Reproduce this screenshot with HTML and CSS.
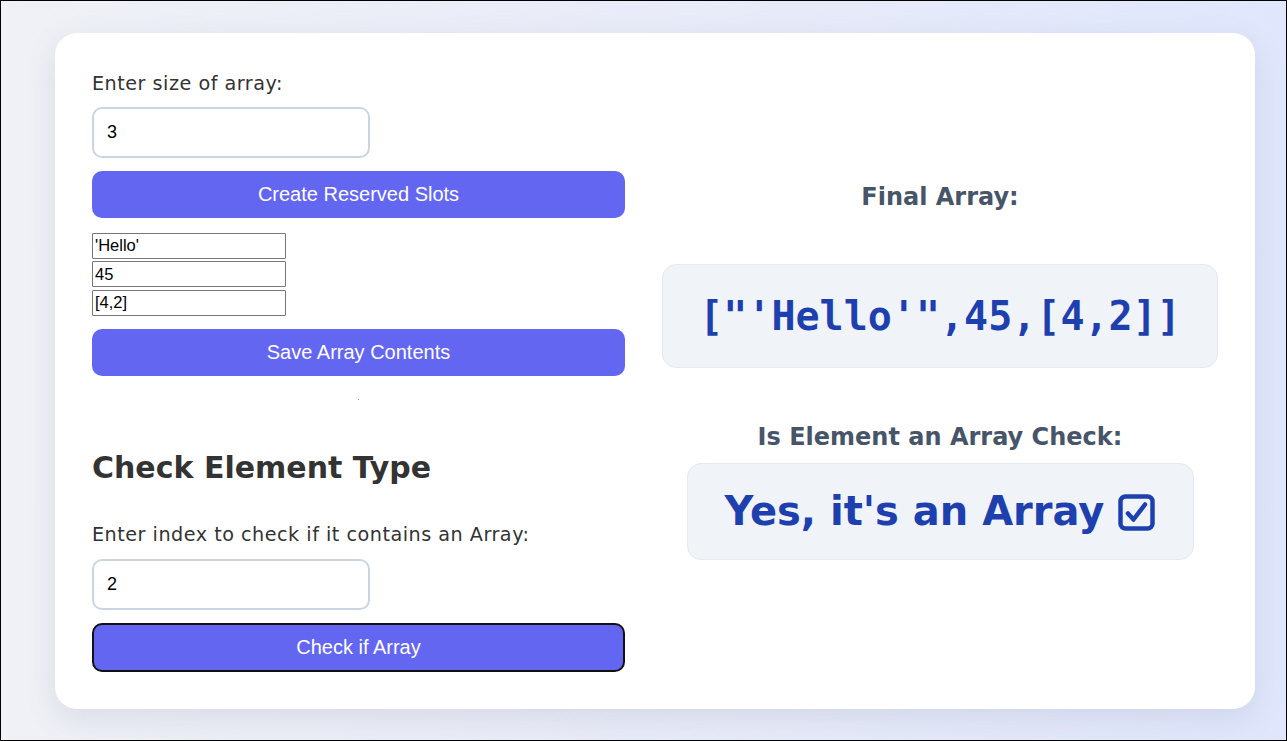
FILE: index.html
```html
<!DOCTYPE html>
<html>
<head>
<meta charset="utf-8">
<link rel="stylesheet" href="styles.css">
</head>
<body>
<div class="page">
  <div class="card">
    <div class="left">
      <label class="label label-1">Enter size of array:</label>
      <input class="field" type="text" value="3">
      <button class="btn">Create Reserved Slots</button>
      <div class="slots">
        <input class="slot" type="text" value="'Hello'">
        <input class="slot" type="text" value="45">
        <input class="slot" type="text" value="[4,2]">
      </div>
      <button class="btn">Save Array Contents</button>
      <div class="dot"></div>
      <h2 class="heading">Check Element Type</h2>
      <label class="label label-2">Enter index to check if it contains an Array:</label>
      <input class="field" type="text" value="2">
      <button class="btn btn-focus">Check if Array</button>
    </div>
    <div class="right">
      <h3 class="title">Final Array:</h3>
      <div class="box box-array">["'Hello'",45,[4,2]]</div>
      <h3 class="title title-2">Is Element an Array Check:</h3>
      <div class="box box-check">Yes, it's an Array<svg class="checkbox" width="37" height="37" viewBox="0 0 37 37"><rect x="2.5" y="2.5" width="32" height="32" rx="5" ry="5" fill="none" stroke="#1e40af" stroke-width="4.5"/><path d="M10 19.5 L15.5 25.5 L27 10.5" fill="none" stroke="#1e40af" stroke-width="4.5" stroke-linecap="round" stroke-linejoin="round"/></svg></div>
    </div>
  </div>
</div>
</body>
</html>
```
FILE: styles.css
```css
html, body {
  margin: 0;
  padding: 0;
}
body {
  width: 1287px;
  height: 741px;
  box-sizing: border-box;
  border: 1px solid #000;
  background: linear-gradient(90deg, #eff1f6 0%, #e9ecf8 50%, #e0e7fc 100%);
  font-family: "DejaVu Sans", sans-serif;
  overflow: hidden;
}
.page {
  padding: 32px 31px 32px 54px;
}
.card {
  width: 1200px;
  height: 676px;
  box-sizing: border-box;
  background: #fff;
  border-radius: 22px;
  box-shadow: 0 10px 30px rgba(100, 110, 140, 0.15);
  padding: 37px;
  display: grid;
  grid-template-columns: 533px 556px;
  column-gap: 37px;
  align-items: center;
}
.left {
  display: flex;
  flex-direction: column;
  align-items: flex-start;
}
.label {
  font-size: 19.2px;
  letter-spacing: 0.5px;
  color: #333;
  line-height: 26px;
  margin-bottom: 11px;
}
.label-1 {
  margin-bottom: 10px;
}
.field {
  width: 278px;
  height: 51px;
  box-sizing: border-box;
  border: 2px solid #cbd5e1;
  border-radius: 10px;
  padding: 0 13px;
  font-family: "Liberation Sans", Arial, sans-serif;
  font-size: 18px;
  color: #000;
  outline: none;
  margin: 0 0 13px 0;
}
.btn {
  width: 533px;
  height: 47px;
  border: none;
  border-radius: 10px;
  background: #6366f1;
  color: #fff;
  font-family: "Liberation Sans", Arial, sans-serif;
  font-size: 20px;
  padding: 0;
  cursor: pointer;
}
.btn-focus {
  height: 49px;
  border: 2px solid #111;
}
.slots {
  display: flex;
  flex-direction: column;
  gap: 2.5px;
  margin: 15px 0 13px;
}
.slot {
  width: 194px;
  height: 26px;
  box-sizing: border-box;
  border: 1px solid #767676;
  border-radius: 1px;
  padding: 0 2px;
  margin: 0;
  font-family: "Liberation Sans", Arial, sans-serif;
  font-size: 16.5px;
  color: #000;
  outline: none;
}
.dot {
  width: 1px;
  height: 1px;
  background: #999;
  margin: 23px 0 0 266px;
}
.heading {
  font-size: 30px;
  font-weight: bold;
  color: #333;
  margin: 50px 0 0 0;
  line-height: 36px;
}
.label-2 {
  margin-top: 36px;
}
.right {
  display: flex;
  flex-direction: column;
  align-items: center;
}
.title {
  font-size: 24px;
  font-weight: bold;
  color: #475569;
  margin: 0;
  line-height: 28px;
}
.box {
  background: #f0f4f9;
  border: 1px solid #e5e9f0;
  border-radius: 14px;
  color: #1e40af;
  font-weight: bold;
  display: flex;
  align-items: center;
  justify-content: center;
  box-sizing: border-box;
}
.box-array {
  width: 556px;
  height: 104px;
  margin-top: 53px;
  font-family: "DejaVu Sans Mono", monospace;
  font-size: 40px;
}
.title-2 {
  margin-top: 55px;
}
.box-check {
  width: 507px;
  height: 97px;
  margin-top: 12px;
  font-size: 40px;
}
.checkbox {
  margin-left: 14px;
  margin-top: 2px;
  flex: none;
}
```
